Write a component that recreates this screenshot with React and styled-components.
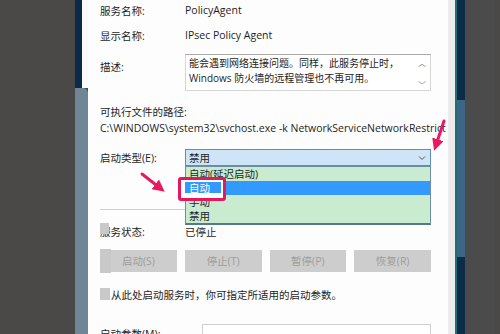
import React from "react";
import styled, { createGlobalStyle } from "styled-components";

const GlobalStyle = createGlobalStyle`
  html, body {
    margin: 0;
    padding: 0;
    background: #4a4948;
  }
  body {
    font-family: "Open Sans", "Noto Sans CJK SC", sans-serif;
    color: #1e1e1e;
  }
`;

const Stage = styled.div`
  position: relative;
  width: 500px;
  height: 334px;
  display: flex;
  overflow: hidden;
  background: #4a4948;
`;

const Backdrop = styled.div`
  width: ${(p) => p.$w}px;
  flex: none;
  background: ${(p) => p.$bg};
`;

const LeftEdge = styled.div`
  width: 13px;
  flex: none;
  display: flex;
  flex-direction: column;
`;

const LeftEdgeTop = styled.div`
  height: 88px;
  background: linear-gradient(90deg, #0b2b48 0 7px, #fbfbfb 7px);
`;

const LeftEdgeSlab = styled.div`
  flex: 1;
  background: #6f8696;
  border-top-right-radius: 5px;
`;

const RightEdge = styled.div`
  width: 8px;
  flex: none;
  display: flex;
  flex-direction: column;
  background: #0b2b48;
  border-left: 2px solid #1f6e78;
`;

const RightEdgeSlab = styled.div`
  margin-top: 100px;
  height: 157px;
  background: #3c6686;
`;

const Dialog = styled.div`
  position: relative;
  width: 367px;
  flex: none;
  box-sizing: border-box;
  padding: 2px 17px 0 12px;
  background: #fdfdfd;
  border-right: 7px solid #ececec;
  font-size: 10.5px;
`;

const Row = styled.div`
  display: flex;
  align-items: ${(p) => (p.$top ? "flex-start" : "center")};
  margin-top: ${(p) => p.$mt || 0}px;
  height: ${(p) => p.$h || 16}px;
`;

const Label = styled.div`
  width: 85px;
  flex: none;
  white-space: nowrap;
  padding-top: ${(p) => p.$pt || 0}px;
`;

const Value = styled.div`
  white-space: nowrap;
`;

const Line = styled.div`
  margin-top: ${(p) => p.$mt || 0}px;
  height: 14px;
  line-height: 14px;
  white-space: nowrap;
  letter-spacing: ${(p) => p.$ls || 0}px;
`;

const TextBox = styled.div`
  position: relative;
  flex: 1;
  height: 37px;
  box-sizing: border-box;
  border: 1px solid #d6d6d6;
  border-top-color: #a9a9a9;
  padding: 1px 16px 0 3px;
  font-size: 10px;
  line-height: 15px;
  background: #fff;
`;

const ScrollGlyph = styled.span`
  position: absolute;
  right: 4px;
  top: ${(p) => p.$top}px;
  font-size: 8px;
  color: #777;
`;

const SelectWrap = styled.div`
  position: relative;
  flex: 1;
  height: 17px;
`;

const Select = styled.div`
  height: 17px;
  box-sizing: border-box;
  border: 1px solid #5f8db5;
  background: #cde5f6;
  display: flex;
  align-items: center;
  justify-content: space-between;
  padding: 0 4px 0 3px;
`;

const Chevron = styled.svg`
  width: 8px;
  height: 6px;
`;

const DropList = styled.div`
  position: absolute;
  left: 0;
  right: 0;
  top: 17px;
  height: 59px;
  box-sizing: border-box;
  border: 1px solid #6d8fa5;
  border-bottom: 2px solid #55788f;
  background: #c9ecd0;
  z-index: 2;
`;

const DropItem = styled.div`
  height: 14px;
  line-height: 14px;
  padding-left: 3px;
  background: ${(p) => (p.$active ? "#3399ff" : "transparent")};
  color: ${(p) => (p.$active ? "#fff" : "#1e1e1e")};
`;

/* pink frame drawn over the list; its middle is open so the
   highlighted item shows through */
const Callout = styled.div`
  position: absolute;
  left: -7px;
  top: 28px;
  width: 48px;
  height: 24px;
  box-sizing: border-box;
  border: 3px solid #e4195d;
  border-radius: 3px;
  box-shadow: inset 0 0 0 2px #fff, inset 0 -3px 0 2px #fff;
  z-index: 3;
`;

const Separator = styled.div`
  margin-top: 43px;
  height: 1px;
  background: #cfcfcf;
`;

const Cover = styled.div`
  position: absolute;
  left: ${(p) => p.$l || 0}px;
  top: ${(p) => p.$t || 0}px;
  width: ${(p) => p.$w}px;
  height: ${(p) => p.$h}px;
  background: #c9c9c9;
`;

const StatusLabel = styled(Label)`
  position: relative;
`;

const ButtonRow = styled.div`
  position: relative;
  display: grid;
  grid-template-columns: repeat(4, 1fr);
  column-gap: 8px;
  margin-top: 11px;
`;

const Btn = styled.div`
  height: 22px;
  line-height: 22px;
  text-align: center;
  background: #cdcdcd;
  color: #9d9d9d;
`;

const Hint = styled.div`
  display: flex;
  align-items: center;
  margin-top: 16px;
  height: 12px;
  white-space: nowrap;
`;

const Check = styled.span`
  width: 10px;
  height: 12px;
  background: #c9c9c9;
  margin-right: 1px;
  flex: none;
`;

const ParamRow = styled.div`
  display: flex;
  align-items: flex-start;
  margin-top: 24px;
`;

const ParamLabel = styled.div`
  width: 102px;
  flex: none;
  padding-top: 2px;
  white-space: nowrap;
`;

const ParamInput = styled.div`
  flex: 1;
  height: 20px;
  border: 1px solid #cfcfcf;
  background: #fff;
`;

const Arrows = styled.svg`
  position: absolute;
  left: 0;
  top: 0;
  width: 500px;
  height: 334px;
  pointer-events: none;
  z-index: 5;
`;

const options = ["自动(延迟启动)", "自动", "手动", "禁用"];

export default function App() {
  return (
    <>
      <GlobalStyle />
      <Stage>
        <Backdrop $w={75} $bg="#4a4947" />
        <LeftEdge>
          <LeftEdgeTop />
          <LeftEdgeSlab />
        </LeftEdge>
        <Dialog>
          <Row>
            <Label>服务名称:</Label>
            <Value>PolicyAgent</Value>
          </Row>
          <Row $mt={9}>
            <Label>显示名称:</Label>
            <Value>IPsec Policy Agent</Value>
          </Row>
          <Row $mt={11} $h={37} $top>
            <Label $pt={5}>描述:</Label>
            <TextBox>
              能会遇到网络连接问题。同样，此服务停止时，
              <br />
              Windows 防火墙的远程管理也不再可用。
              <ScrollGlyph $top={0}>︿</ScrollGlyph>
              <ScrollGlyph $top={22}>﹀</ScrollGlyph>
            </TextBox>
          </Row>
          <Line $mt={14}>可执行文件的路径:</Line>
          <Line $mt={2}>C:\WINDOWS\system32\svchost.exe -k NetworkServiceNetworkRestrict</Line>
          <Row $mt={14} $h={17}>
            <Label>启动类型(E):</Label>
            <SelectWrap>
              <Select>
                <span>禁用</span>
                <Chevron viewBox="0 0 8 6">
                  <path d="M1 1.5 L4 4.5 L7 1.5" fill="none" stroke="#555" strokeWidth="1" />
                </Chevron>
              </Select>
              <DropList>
                {options.map((o, i) => (
                  <DropItem key={o} $active={i === 1}>
                    {o}
                  </DropItem>
                ))}
              </DropList>
              <Callout />
            </SelectWrap>
          </Row>
          <Separator />
          <Row $mt={13}>
            <StatusLabel>
              服务状态:
              <Cover $l={0} $t={-1} $w={9} $h={11} />
            </StatusLabel>
            <Value>已停止</Value>
          </Row>
          <ButtonRow>
            <Btn>启动(S)</Btn>
            <Btn>停止(T)</Btn>
            <Btn>暂停(P)</Btn>
            <Btn>恢复(R)</Btn>
            <Cover $l={0} $t={-1} $w={11} $h={24} />
          </ButtonRow>
          <Hint>
            <Check />
            从此处启动服务时，你可指定所适用的启动参数。
          </Hint>
          <ParamRow>
            <ParamLabel>启动参数(M):</ParamLabel>
            <ParamInput />
          </ParamRow>
        </Dialog>
        <RightEdge>
          <RightEdgeSlab />
        </RightEdge>
        <Backdrop $w={30} $bg="#4b4b4b" />
        <Arrows viewBox="0 0 500 334">
          <defs>
            <marker id="head" viewBox="0 0 10 10" refX="5" refY="5" markerWidth="4" markerHeight="4" orient="auto">
              <path d="M0 0 L10 5 L0 10 z" fill="#e8195f" />
            </marker>
          </defs>
          <path d="M142 174 L160 188" stroke="#e8195f" strokeWidth="3" strokeLinecap="round" markerEnd="url(#head)" />
          <path d="M444 121 L436 145" stroke="#e8195f" strokeWidth="3" strokeLinecap="round" markerEnd="url(#head)" />
        </Arrows>
      </Stage>
    </>
  );
}
